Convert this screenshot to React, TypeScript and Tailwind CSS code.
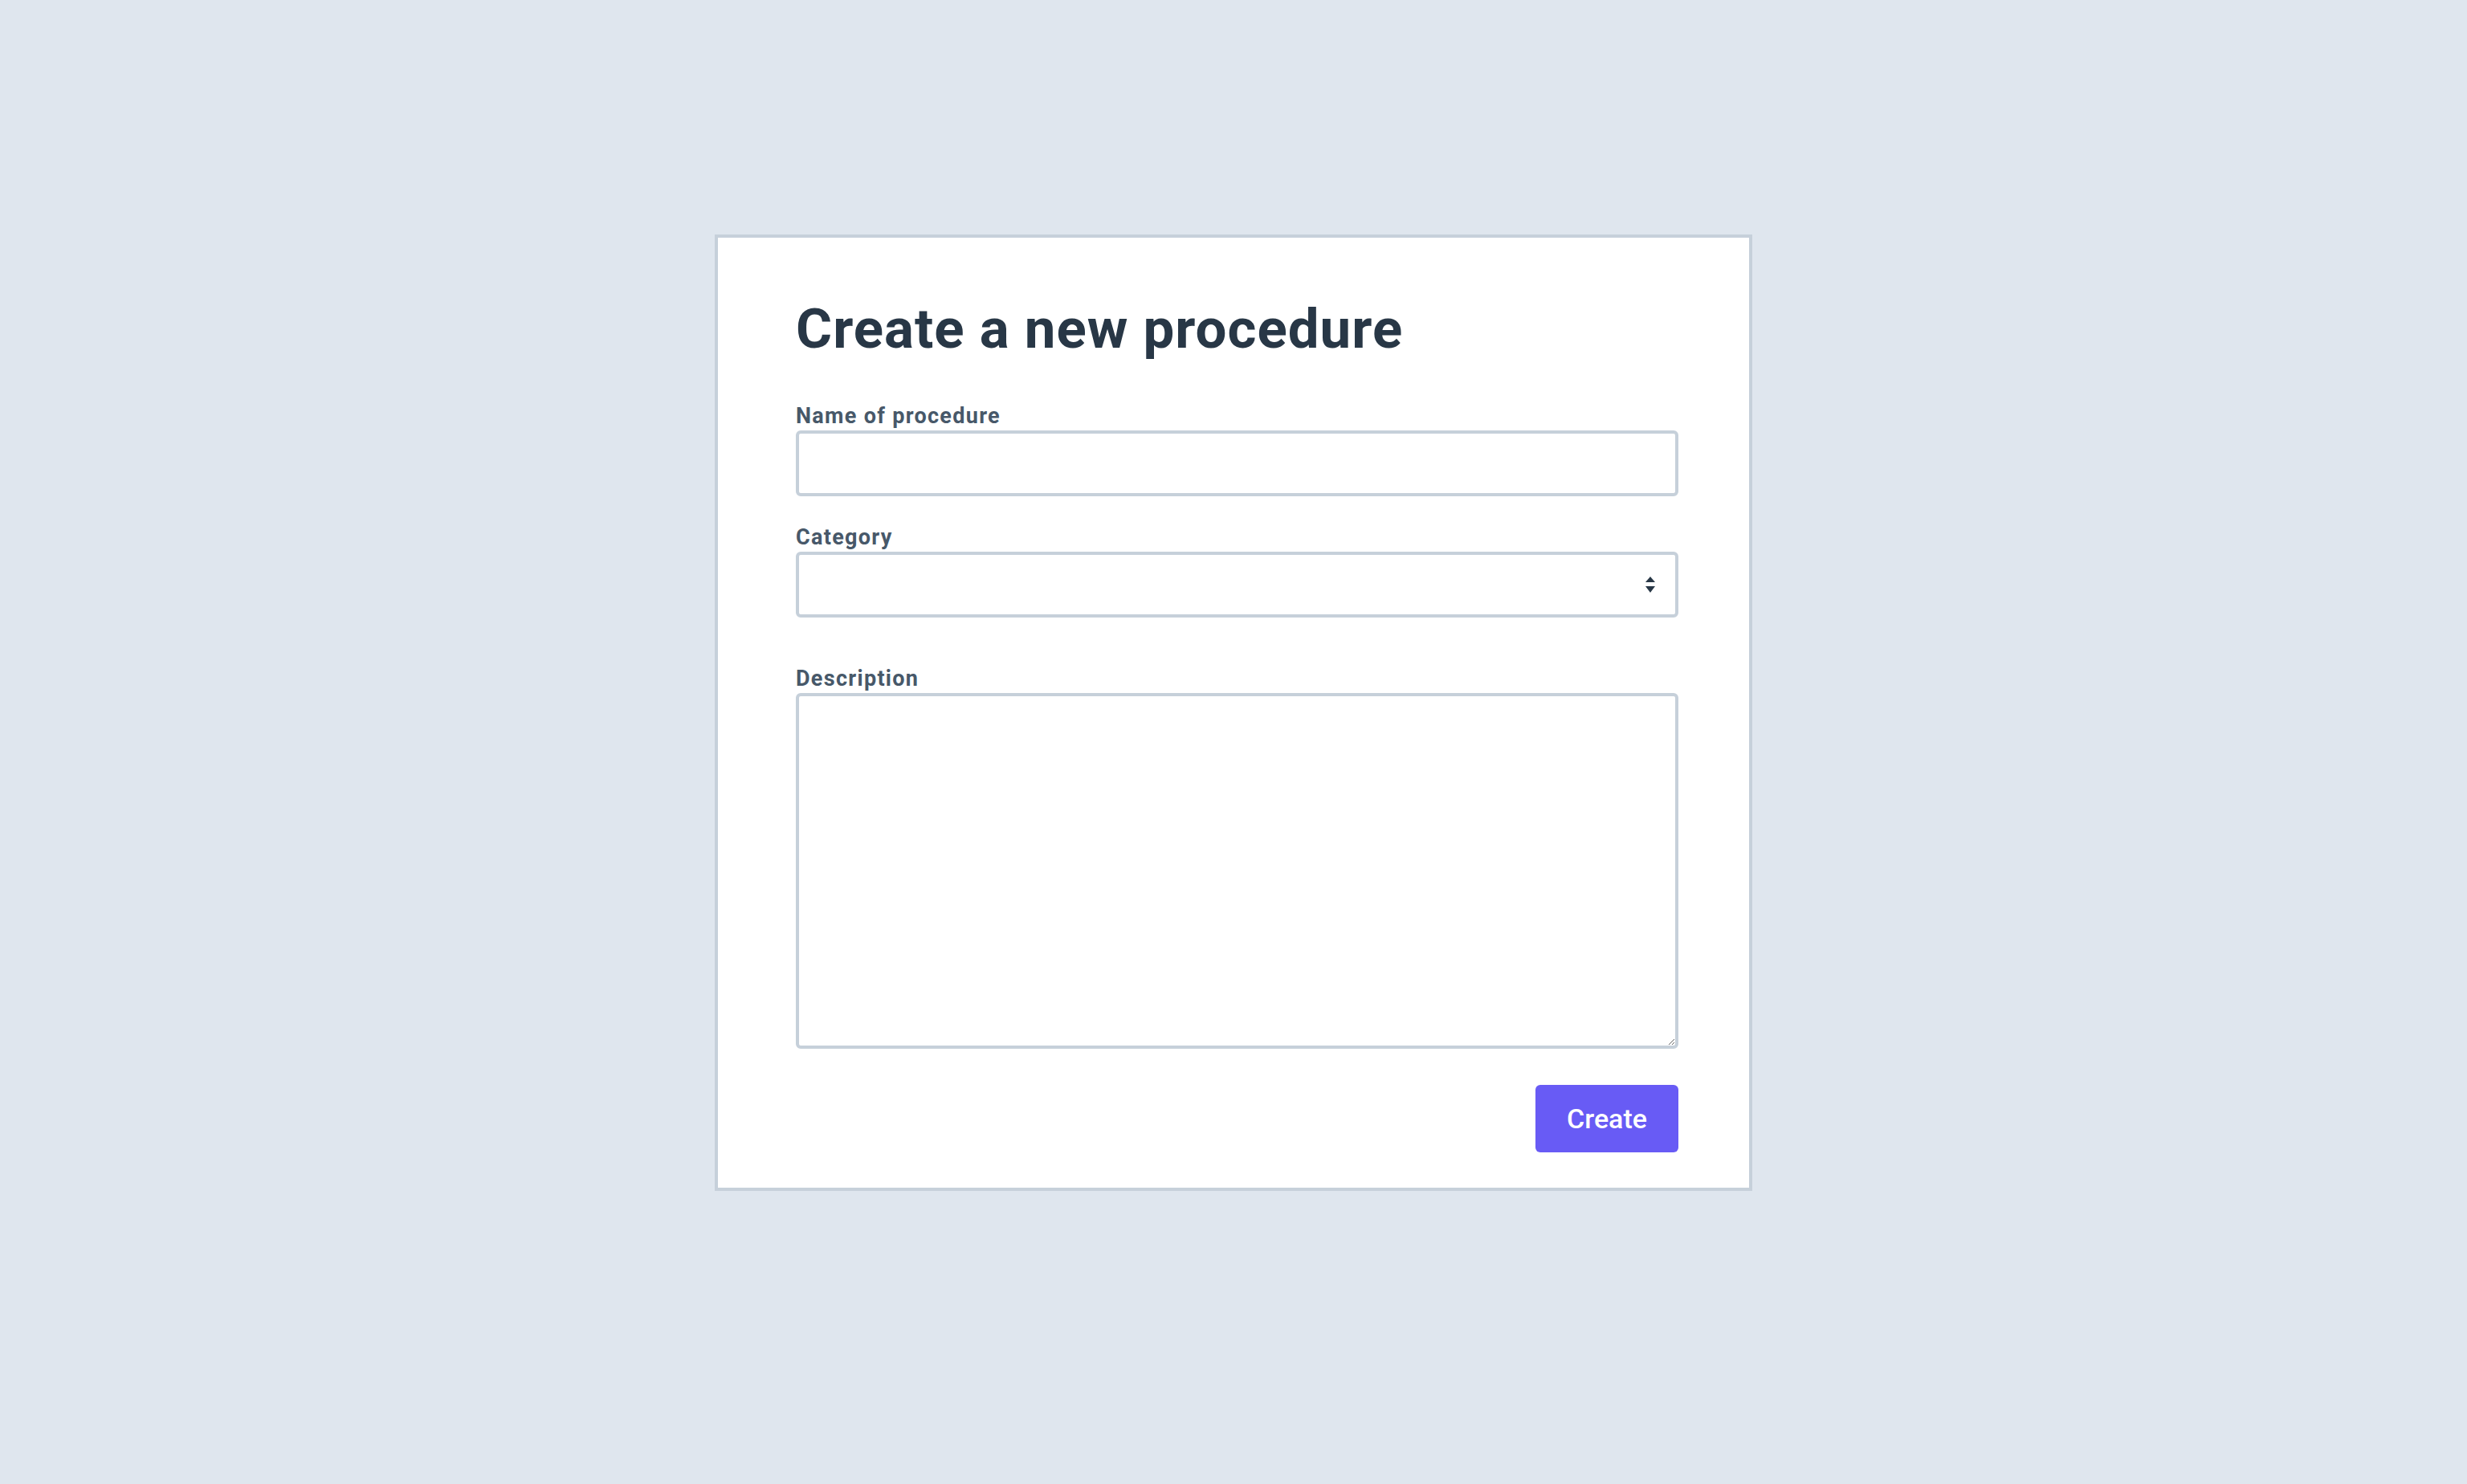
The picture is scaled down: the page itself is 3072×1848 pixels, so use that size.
import React from "react";

function Label({ htmlFor, children }: { htmlFor: string; children: React.ReactNode }) {
  return (
    <label
      htmlFor={htmlFor}
      className="block text-[27px] leading-[32px] font-bold text-[#475869] tracking-[1.3px] mb-[2px]"
    >
      {children}
    </label>
  );
}

export default function App() {
  return (
    <div
      className="min-h-screen bg-[#dfe6ee] pt-[292px]"
      style={{ fontFamily: "Roboto, 'Liberation Sans', sans-serif" }}
    >
      <div className="mx-auto w-[1292px] bg-white border-[4px] border-[#c6d0da] pl-[97px] pt-[74px] pb-[44px]">
        <h1 className="text-[69px] leading-[80px] font-bold text-[#283746] tracking-[1px]">
          Create a new procedure
        </h1>

        <form className="w-[1099px] mt-[52px]" onSubmit={(e) => e.preventDefault()}>
          <Label htmlFor="name">Name of procedure</Label>
          <input
            id="name"
            type="text"
            className="block w-full h-[82px] border-[4px] border-[#c6d0da] rounded-[6px] bg-white px-4 text-[28px] outline-none"
          />

          <div className="mt-[35px]">
            <Label htmlFor="category">Category</Label>
            <div className="relative">
              <select
                id="category"
                defaultValue=""
                className="block w-full h-[82px] appearance-none border-[4px] border-[#c6d0da] rounded-[6px] bg-white px-4 text-[28px] outline-none"
              >
                <option value=""></option>
              </select>
              <svg
                className="pointer-events-none absolute right-[29px] top-1/2 -translate-y-1/2"
                width="12"
                height="20"
                viewBox="0 0 12 20"
              >
                <path d="M6 0 L12 7 L0 7 Z" fill="#283746" />
                <path d="M0 12 L12 12 L6 20 Z" fill="#283746" />
              </svg>
            </div>
          </div>

          <div className="mt-[60px]">
            <Label htmlFor="description">Description</Label>
            <textarea
              id="description"
              className="block w-full h-[443px] border-[4px] border-[#c6d0da] rounded-[6px] bg-white px-4 py-3 text-[28px] outline-none"
            />
          </div>

          <div className="flex justify-end mt-[45px]">
            <button
              type="submit"
              className="w-[178px] h-[84px] rounded-[6px] bg-[#685bf5] text-white text-[34px] font-medium"
            >
              Create
            </button>
          </div>
        </form>
      </div>
    </div>
  );
}
